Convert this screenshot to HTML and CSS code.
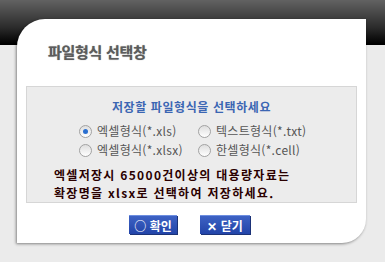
FILE: index.html
```html
<!DOCTYPE html>
<html lang="ko">
<head>
<meta charset="UTF-8">
<title>파일형식 선택창</title>
<link rel="stylesheet" href="styles.css">
</head>
<body>
<div class="popup">
  <h1 class="title">파일형식 선택창</h1>
  <div class="box">
    <p class="guide">저장할 파일형식을 선택하세요</p>
    <div class="options">
      <label class="opt"><span class="radio checked"></span>엑셀형식(*.xls)</label>
      <label class="opt"><span class="radio"></span>텍스트형식(*.txt)</label>
      <label class="opt"><span class="radio"></span>엑셀형식(*.xlsx)</label>
      <label class="opt"><span class="radio"></span>한셀형식(*.cell)</label>
    </div>
    <p class="notice">엑셀저장시 65000건이상의 대용량자료는<br>확장명을 xlsx로 선택하여 저장하세요.</p>
  </div>
  <div class="buttons">
    <button class="btn">○ 확인</button>
    <button class="btn">✕ 닫기</button>
  </div>
</div>
</body>
</html>
```

FILE: styles.css
```css
html, body {
  margin: 0;
  height: 100%;
}
body {
  background: linear-gradient(#626262 0, #2a2a2a 28px, #000 44px, #000 45px, #ebebeb 45px) no-repeat, #ebebeb;
  font-family: "Noto Sans CJK KR", "Noto Sans", sans-serif;
  padding: 19px 0 0 17px;
  box-sizing: border-box;
  overflow: hidden;
}
.popup {
  width: 349px;
  height: 224px;
  background: #fff;
  border-radius: 28px 0 24px 0;
  box-shadow: -1px 1px 3px rgba(0, 0, 0, 0.45);
  box-sizing: border-box;
  padding: 23px 9px 0 9px;
}
.title {
  margin: 0 0 0 22px;
  font-size: 15px;
  line-height: 20px;
  font-weight: bold;
  color: #5c5c5c;
  text-shadow: 0 0 1px #888;
  letter-spacing: -0.3px;
}
.box {
  margin-top: 24px;
  height: 117px;
  background: #ececec;
  border: 1px solid #d6d6d6;
  box-sizing: border-box;
  padding-top: 11px;
}
.guide {
  margin: 0;
  text-align: center;
  font-size: 12px;
  line-height: 17px;
  font-weight: bold;
  color: #3b66b3;
  letter-spacing: 0.6px;
}
.options {
  display: grid;
  grid-template-columns: 119px auto;
  row-gap: 3px;
  margin: 8px 0 0 52px;
}
.opt {
  display: flex;
  align-items: center;
  gap: 5px;
  font-size: 12px;
  line-height: 16px;
  color: #555;
  letter-spacing: 0.3px;
}
.radio {
  width: 13px;
  height: 13px;
  border-radius: 50%;
  border: 1px solid #a2a2a2;
  background: linear-gradient(#dedede, #fff);
  box-sizing: border-box;
  display: flex;
  align-items: center;
  justify-content: center;
}
.radio.checked::after {
  content: "";
  width: 5px;
  height: 5px;
  border-radius: 50%;
  background: #2a6fd0;
}
.notice {
  margin: 8px 0 0 27px;
  font-size: 12px;
  line-height: 17.5px;
  font-weight: bold;
  color: #2a0000;
  letter-spacing: 1.3px;
}
.buttons {
  display: flex;
  justify-content: center;
  gap: 23px;
  margin-top: 12px;
  padding-right: 4px;
}
.btn {
  width: 48px;
  height: 19px;
  padding: 0;
  border: none;
  border-top: 1px solid #6d8ee0;
  background: linear-gradient(#3d62c4, #2244a8);
  box-shadow: 1px 1px 0 #1b3277;
  color: #fff;
  font-family: "Noto Sans CJK KR", sans-serif;
  font-size: 12px;
  font-weight: bold;
  line-height: 17px;
}
.btn + .btn {
  width: 50px;
}
```
